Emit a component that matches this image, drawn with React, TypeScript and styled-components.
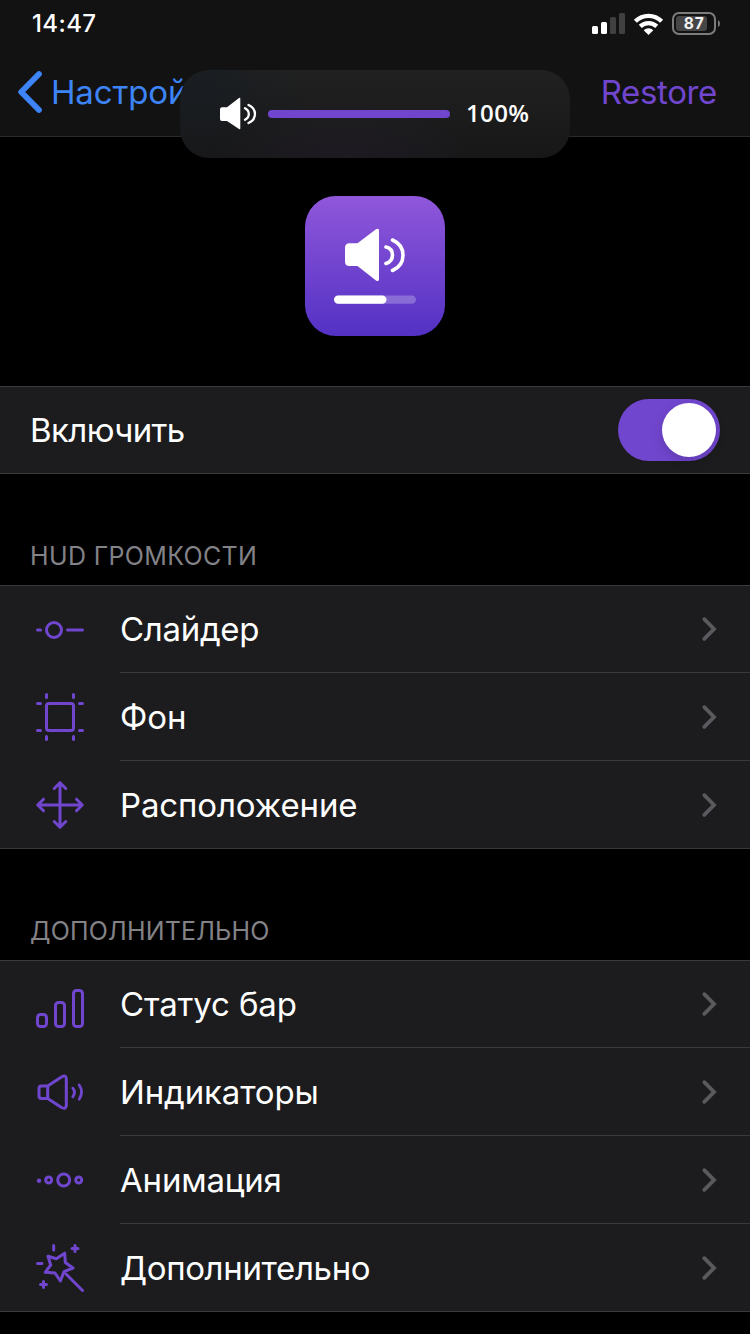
import React from "react";
import styled, { createGlobalStyle } from "styled-components";

const accent = "#7146cf";
const ui = `Inter, "Liberation Sans", sans-serif`;

const GlobalStyle = createGlobalStyle`
  * { box-sizing: border-box; }
  body { margin: 0; background: #000; }
`;

const Screen = styled.div`
  position: relative;
  display: flex;
  flex-direction: column;
  width: 750px;
  height: 1334px;
  overflow: hidden;
  background: #000;
  color: #fff;
  font-family: ${ui};
`;

const Header = styled.header`
  height: 137px;
  background: #121212;
  border-bottom: 1px solid #2a2a2b;
`;

const StatusBar = styled.div`
  display: flex;
  align-items: center;
  justify-content: space-between;
  height: 48px;
  padding: 0 30px 0 32px;
`;

const Clock = styled.span`
  font-size: 24px;
  font-weight: 500;
  line-height: 48px;
  letter-spacing: 0.4px;
`;

const StatusIcons = styled.div`
  display: flex;
  align-items: center;
  gap: 9px;
`;

const NavBar = styled.nav`
  display: flex;
  align-items: center;
  justify-content: space-between;
  height: 88px;
  padding: 0 33px 0 17px;
  font-size: 33px;
`;

const BackButton = styled.a`
  display: flex;
  align-items: center;
  gap: 7px;
  color: #3d84f7;
`;

const NavText = styled.span<{ $track: number }>`
  line-height: 44px;
  white-space: nowrap;
  letter-spacing: ${(p) => p.$track}px;
`;

const RestoreButton = styled.a`
  display: flex;
  color: ${accent};
`;

const VolumeHud = styled.div`
  position: absolute;
  top: 70px;
  left: 180px;
  display: flex;
  align-items: center;
  width: 390px;
  height: 88px;
  padding: 0 40px 0 39px;
  border-radius: 29px;
  background:
    radial-gradient(ellipse 130px 60px at 42% 100%, rgba(36, 30, 44, 0.5), transparent),
    radial-gradient(ellipse 110px 80px at 5% 20%, rgba(20, 27, 34, 0.6), transparent),
    linear-gradient(#212121, #171718);
`;

const HudTrack = styled.div`
  width: 182px;
  height: 8px;
  margin-left: 11px;
  border-radius: 4px;
  background: ${accent};
`;

const HudValue = styled.span`
  margin-left: 16px;
  padding-bottom: 2px;
  font-family: "Open Sans", sans-serif;
  font-size: 24px;
  font-weight: 650;
  line-height: 32px;
  letter-spacing: 0.4px;
`;

const Hero = styled.section`
  display: flex;
  justify-content: center;
  height: 249px;
  padding-top: 59px;
`;

const AppIcon = styled.div`
  width: 140px;
  height: 140px;
  border-radius: 31px;
  background: linear-gradient(#9057da, #5331c4);
`;

const Group = styled.section`
  background: #1c1c1e;
  border-top: 1px solid #3a3a3c;
  border-bottom: 1px solid #3a3a3c;
`;

const Row = styled.div`
  display: flex;
  align-items: center;
  height: 88px;
  &:first-child { height: 87px; }
  &:last-child { height: 87px; }
  &:only-child { height: 86px; }
`;

const ToggleRow = styled(Row)`
  justify-content: space-between;
  padding: 0 30px;
`;

const IconSlot = styled.div`
  flex: none;
  display: flex;
  justify-content: center;
  width: 120px;
`;

const RowBody = styled.div`
  flex: 1;
  display: flex;
  align-items: center;
  justify-content: space-between;
  height: 100%;
  padding-right: 33px;
  border-bottom: 1px solid #3a3a3c;
  ${Row}:last-child & { border-bottom: none; }
`;

const Label = styled.span<{ $track: number }>`
  font-size: 33px;
  line-height: 44px;
  white-space: nowrap;
  letter-spacing: ${(p) => p.$track}px;
`;

const SectionTitle = styled.h2<{ $track: number }>`
  display: flex;
  align-items: flex-end;
  height: 111px;
  margin: 0;
  padding: 0 30px 13px;
  color: #828287;
  font-size: 25px;
  font-weight: 400;
  line-height: 32px;
  letter-spacing: ${(p) => p.$track}px;
`;

const Switch = styled.div`
  display: flex;
  justify-content: flex-end;
  width: 102px;
  height: 62px;
  padding: 4px;
  border-radius: 31px;
  background: ${accent};
`;

const Knob = styled.div`
  width: 54px;
  height: 54px;
  border-radius: 50%;
  background: #fff;
  box-shadow: 0 4px 12px rgba(0, 0, 0, 0.16);
`;

const Glyph = styled.svg`
  display: block;
  flex: none;
  overflow: visible;
`;

const LineIcon = ({ children }: { children: React.ReactNode }) => (
  <Glyph width="48" height="48" viewBox="0 0 48 48" fill="none" stroke={accent} strokeWidth="3" strokeLinecap="round" strokeLinejoin="round">
    {children}
  </Glyph>
);

const SliderIcon = () => (
  <LineIcon>
    <path d="M1.5 24h3M31.5 24h15" />
    <circle cx="18" cy="24" r="7.5" />
  </LineIcon>
);

const FrameIcon = () => (
  <LineIcon>
    <rect x="10.5" y="10.5" width="27" height="27" rx="2.5" />
    <path d="M10.5 1.5v3M37.5 1.5v3M10.5 43.5v3M37.5 43.5v3M1.5 10.5h3M1.5 37.5h3M43.5 10.5h3M43.5 37.5h3" />
  </LineIcon>
);

const MoveIcon = () => (
  <LineIcon>
    <path d="M24 2v44M2 24h44M18.2 7.5L24 1.7l5.8 5.8M18.2 40.5l5.8 5.8 5.8-5.8M7.5 18.2L1.7 24l5.8 5.8M40.5 18.2l5.8 5.8-5.8 5.8" />
  </LineIcon>
);

const BarsIcon = () => (
  <LineIcon>
    <rect x="1.5" y="33.5" width="9" height="12" rx="3" />
    <rect x="19.5" y="21.5" width="9" height="24" rx="3" />
    <rect x="37.5" y="9.5" width="9" height="36" rx="3" />
  </LineIcon>
);

const SpeakerIcon = () => (
  <LineIcon>
    <path d="M11.7 18H5.5Q3 18 3 20.500v7.500q0 2.500 2.500 2.500h6.200zM11.700 18L25.500 9Q30 6.500 30.300 10.500V37.500Q30 41.500 25.500 39.500L11.700 30.500" />
    <path d="M36.800 20.200q3.400 4.200 0 8.600M43.200 17q4.800 7 0 14.200" strokeWidth="2.800" />
  </LineIcon>
);

const DotsIcon = () => (
  <LineIcon>
    <circle cx="3" cy="24.700" r="2.200" fill={accent} stroke="none" />
    <circle cx="12.700" cy="24" r="3" />
    <circle cx="27.700" cy="24" r="6" />
    <circle cx="42.700" cy="24" r="3" />
  </LineIcon>
);

const WandIcon = () => (
  <LineIcon>
    <path d="M12 12.300L20.300 14.700 28.700 9.200 29.300 18.500 37 24 28 27.700 24.400 37 19 29 9.200 28.300 14.700 21z" />
    <path d="M30 30l16.500 16.500M17.700 1.500v4.500M1.500 19.500h4.500M39 1.500v6M36 4.500h6M7.500 37.500v6M4.500 40.500h6" />
  </LineIcon>
);

const ChevronRight = () => (
  <Glyph width="15" height="24" viewBox="0 0 15 24" fill="none" stroke="#5a5a5e" strokeWidth="3.800" strokeLinecap="round">
    <path d="M2.300 2.200L12 12 2.300 21.800" />
  </Glyph>
);

type Item = { label: string; track: number; icon: React.ReactNode };

const hudItems: Item[] = [
  { label: "Слайдер", track: -0.3, icon: <SliderIcon /> },
  { label: "Фон", track: 0, icon: <FrameIcon /> },
  { label: "Расположение", track: -0.15, icon: <MoveIcon /> },
];

const extraItems: Item[] = [
  { label: "Статус бар", track: -0.15, icon: <BarsIcon /> },
  { label: "Индикаторы", track: -0.15, icon: <SpeakerIcon /> },
  { label: "Анимация", track: -0.2, icon: <DotsIcon /> },
  { label: "Дополнительно", track: -0.35, icon: <WandIcon /> },
];

const MenuGroup = ({ items }: { items: Item[] }) => (
  <Group>
    {items.map((item) => (
      <Row key={item.label}>
        <IconSlot>{item.icon}</IconSlot>
        <RowBody>
          <Label $track={item.track}>{item.label}</Label>
          <ChevronRight />
        </RowBody>
      </Row>
    ))}
  </Group>
);

export default function App() {
  return (
    <Screen>
      <GlobalStyle />
      <Header>
        <StatusBar>
          <Clock>14:47</Clock>
          <StatusIcons>
            <Glyph width="33" height="22" viewBox="0 0 33 22" fill="#fff">
              <rect x="0" y="13" width="6" height="8" rx="1.500" />
              <rect x="9" y="9" width="6" height="12" rx="1.500" />
              <rect x="18" y="4" width="6" height="17" rx="1.500" fill="#404040" />
              <rect x="27" y="0" width="6" height="21" rx="1.500" fill="#404040" />
            </Glyph>
            <Glyph width="29" height="22" viewBox="0 0 29 22" fill="none" stroke="#fff" strokeWidth="4.300">
              <path d="M1.400 8.200a18.600 18.600 0 0 1 26.200 0M6.300 13.400a11.700 11.700 0 0 1 16.400 0" />
              <path d="M14.500 22l-4.800-4.800a6.800 6.800 0 0 1 9.600 0z" fill="#fff" stroke="none" />
            </Glyph>
            <Glyph width="48" height="24" viewBox="0 0 48 24">
              <rect x="1" y="1" width="42" height="21" rx="6" fill="none" stroke="#7c7c7c" strokeWidth="2" />
              <rect x="4" y="4" width="31" height="15" rx="3" fill="#464646" />
              <path d="M46 8q2 1 2 3.500T46 15z" fill="#7c7c7c" />
              <text x="22.200" y="17" textAnchor="middle" fill="#f4f4f4" fontFamily="Inter, sans-serif" fontSize="15.500" fontWeight="700" letterSpacing="0.8">87</text>
            </Glyph>
          </StatusIcons>
        </StatusBar>
        <NavBar>
          <BackButton>
            <Glyph width="27" height="44" viewBox="0 0 27 44" fill="none" stroke="#3d84f7" strokeWidth="5.800" strokeLinecap="round" strokeLinejoin="round">
              <path d="M22 4L4.200 22l17.800 18" />
            </Glyph>
            <NavText $track={-0.15}>Настройки</NavText>
          </BackButton>
          <RestoreButton>
            <NavText $track={-0.35}>Restore</NavText>
          </RestoreButton>
        </NavBar>
      </Header>

      <Hero>
        <AppIcon>
          <Glyph width="140" height="140" viewBox="0 0 140 140" fill="none" stroke="#fff" strokeWidth="3.600" strokeLinecap="round">
            <path d="M44.500 47.300H52.500L71 33.300Q74 31.500 74 34.700V83Q74 86.200 71 84.500L52.500 70H44.500Q40 70 40 65.500V51.800Q40 47.300 44.500 47.300z" fill="#fff" stroke="none" />
            <path d="M81 51q6.500 1.500 6.500 8T81 67.500M87.500 44q10.500 4.500 10.500 15.200T87.500 74.500" />
            <rect x="29" y="99.500" width="82" height="8.300" rx="4.150" fill="#fff" fillOpacity="0.250" stroke="none" />
            <rect x="29" y="99.500" width="52.500" height="8.300" rx="4.150" fill="#fff" stroke="none" />
          </Glyph>
        </AppIcon>
      </Hero>

      <Group>
        <ToggleRow>
          <Label $track={-0.6}>Включить</Label>
          <Switch>
            <Knob />
          </Switch>
        </ToggleRow>
      </Group>

      <SectionTitle $track={0.35}>HUD ГРОМКОСТИ</SectionTitle>
      <MenuGroup items={hudItems} />

      <SectionTitle $track={0.18}>ДОПОЛНИТЕЛЬНО</SectionTitle>
      <MenuGroup items={extraItems} />

      <VolumeHud>
        <Glyph width="38" height="34" viewBox="0 0 38 34" fill="none" stroke="#fff" strokeWidth="2.300" strokeLinecap="round">
          <path d="M3 10.300H8L20 1q1.300-.800 1.300.500V31.500q0 1.300-1.300.500L8 24H3q-2 0-2-2V12.300q0-2 2-2z" fill="#fff" stroke="none" />
          <path d="M26 11.200q3.800 2 3.800 5.800T26 22.800M29.500 8q6.500 3 6.500 9T29.500 26" />
        </Glyph>
        <HudTrack />
        <HudValue>100%</HudValue>
      </VolumeHud>
    </Screen>
  );
}
